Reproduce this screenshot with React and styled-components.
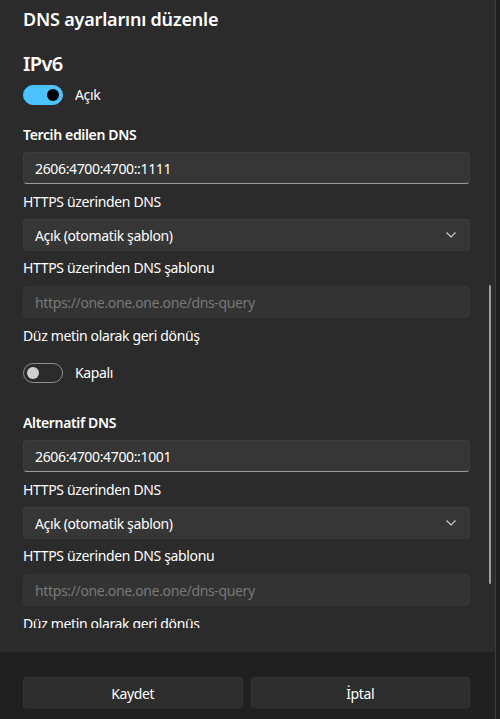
import React from "react"
import styled, { createGlobalStyle } from "styled-components"

const GlobalStyle = createGlobalStyle`
  *, *::before, *::after {
    box-sizing: border-box;
  }
  html, body {
    margin: 0;
    padding: 0;
    background: #1f1f1f;
  }
  body {
    font-family: "Noto Sans", "Open Sans", sans-serif;
    color: #ffffff;
  }
`

const Dialog = styled.div`
  width: 496px;
  height: 719px;
  border-right: 1px solid #3d3d3d;
  display: flex;
  flex-direction: column;
  overflow: hidden;
`

const Content = styled.div`
  position: relative;
  flex: 1;
  background: #2b2b2b;
  padding: 0 25px 24px 23px;
  display: flex;
  flex-direction: column;
  min-height: 0;
`

const Scroller = styled.div`
  flex: 1;
  min-height: 0;
  overflow: hidden;
  display: flex;
  flex-direction: column;
`

const ScrollThumb = styled.div`
  position: absolute;
  right: 4px;
  top: 285px;
  width: 2px;
  height: 299px;
  border-radius: 1px;
  background: #9e9e9e;
`

const Title = styled.h1`
  margin: ${(p) => p.$top}px 0 0;
  font-size: 18px;
  line-height: 28px;
  font-weight: 600;
  letter-spacing: -0.2px;
  flex-shrink: 0;
`

const Heading = styled.h2`
  margin: ${(p) => p.$top}px 0 0;
  font-size: 20px;
  line-height: 28px;
  font-weight: 600;
  letter-spacing: -0.6px;
  flex-shrink: 0;
`

const Label = styled.div`
  margin-top: ${(p) => p.$top}px;
  font-size: 14px;
  line-height: 20px;
  letter-spacing: -0.35px;
  font-weight: ${(p) => (p.$strong ? 600 : 400)};
  flex-shrink: 0;
`

const TextBox = styled.div`
  margin-top: ${(p) => p.$top ?? 7}px;
  height: 32px;
  flex-shrink: 0;
  display: flex;
  align-items: center;
  padding: 0 11px;
  border-radius: 4px;
  font-size: 14px;
  letter-spacing: -0.35px;
  background: ${(p) => (p.$disabled ? "#333333" : "#363636")};
  border: 1px solid ${(p) => (p.$disabled ? "#363636" : "#3c3c3c")};
  border-bottom-color: ${(p) => (p.$disabled ? "#363636" : "#9a9a9a")};
  color: ${(p) => (p.$disabled ? "#787878" : "#ffffff")};
`

const Select = styled(TextBox)`
  justify-content: space-between;
  border-bottom-color: #383838;
  padding-right: 13px;
`

const ToggleRow = styled.div`
  margin-top: ${(p) => p.$top}px;
  display: flex;
  align-items: center;
  gap: 12px;
  font-size: 14px;
  line-height: 20px;
  letter-spacing: -0.35px;
  flex-shrink: 0;
`

const Track = styled.span`
  position: relative;
  width: 40px;
  height: 20px;
  border-radius: 10px;
  background: ${(p) => (p.$on ? "#4cc2ff" : "transparent")};
  border: 1px solid ${(p) => (p.$on ? "#4cc2ff" : "#8f8f8f")};
`

const Knob = styled.span`
  position: absolute;
  top: 3px;
  left: ${(p) => (p.$on ? "23px" : "3px")};
  width: 12px;
  height: 12px;
  border-radius: 50%;
  background: ${(p) => (p.$on ? "#000000" : "#cfcfcf")};
`

const Footer = styled.div`
  height: 67px;
  flex-shrink: 0;
  background: #202020;
  padding: 25px 25px 0 23px;
  display: grid;
  grid-template-columns: 1fr 1fr;
  column-gap: 8px;
  align-items: start;
`

const Button = styled.button`
  height: 32px;
  border-radius: 4px;
  background: #2d2d2d;
  border: 1px solid #353535;
  border-bottom-color: #2a2a2a;
  color: #ffffff;
  font-family: inherit;
  font-size: 14px;
  letter-spacing: -0.35px;
`

const Chevron = () => (
  <svg width="10" height="6" viewBox="0 0 10 6">
    <polyline points="0.5,0.5 5,5 9.5,0.5" fill="none" stroke="#d0d0d0" strokeWidth="1.1" />
  </svg>
)

const Toggle = ({ on, top, children }) => (
  <ToggleRow $top={top}>
    <Track $on={on}>
      <Knob $on={on} />
    </Track>
    {children}
  </ToggleRow>
)

const DnsGroup = ({ title, titleTop, address }) => (
  <>
    <Label $strong $top={titleTop}>{title}</Label>
    <TextBox>{address}</TextBox>
    <Label $top={8}>HTTPS üzerinden DNS</Label>
    <Select>
      Açık (otomatik şablon)
      <Chevron />
    </Select>
    <Label $top={7}>HTTPS üzerinden DNS şablonu</Label>
    <TextBox $disabled $top={8}>https://one.one.one.one/dns-query</TextBox>
    <Label $top={8}>Düz metin olarak geri dönüş</Label>
  </>
)

export default function App() {
  return (
    <>
      <GlobalStyle />
      <Dialog>
        <Content>
          <Scroller>
            <Title $top={5}>DNS ayarlarını düzenle</Title>
            <Heading $top={17}>IPv6</Heading>
            <Toggle on top={7}>Açık</Toggle>
            <DnsGroup title="Tercih edilen DNS" titleTop={20} address="2606:4700:4700::1111" />
            <Toggle top={17}>Kapalı</Toggle>
            <DnsGroup title="Alternatif DNS" titleTop={30} address="2606:4700:4700::1001" />
          </Scroller>
          <ScrollThumb />
        </Content>
        <Footer>
          <Button>Kaydet</Button>
          <Button>İptal</Button>
        </Footer>
      </Dialog>
    </>
  )
}
